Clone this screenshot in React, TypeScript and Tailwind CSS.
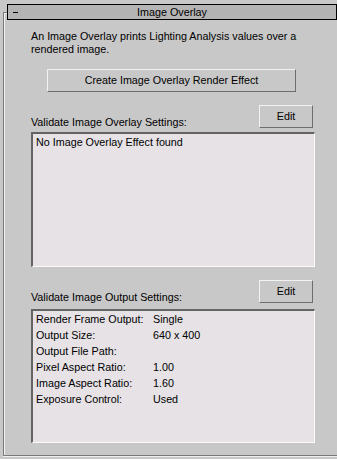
import React from 'react';

const font = { fontFamily: '"Liberation Sans", Arial, sans-serif' };

const Button = ({ label, className }: { label: string; className: string }) => (
  <button
    className={`flex items-center justify-center bg-[#c8c8c8] text-black border border-t-[#f2f2f2] border-l-[#f2f2f2] border-b-[#6e6e6e] border-r-[#6e6e6e] ${className}`}
  >
    {label}
  </button>
);

const ListBox = ({ height, children }: { height: string; children?: React.ReactNode }) => (
  <div
    className={`w-[284px] ${height} bg-[#e6e2e6] border-t-2 border-l-2 border-t-[#646464] border-l-[#646464] border-r border-b border-r-[#fafafa] border-b-[#fafafa] pl-[3px] leading-[16px]`}
  >
    {children}
  </div>
);

const App = () => {
  const outputRows = [
    { label: 'Render Frame Output:', value: 'Single' },
    { label: 'Output Size:', value: '640 x 400' },
    { label: 'Output File Path:', value: '' },
    { label: 'Pixel Aspect Ratio:', value: '1.00' },
    { label: 'Image Aspect Ratio:', value: '1.60' },
    { label: 'Exposure Control:', value: 'Used' }
  ];

  return (
    <div className="w-[337px] h-[459px] bg-[#c8c8c8] overflow-hidden pt-[12px] pl-[3px] text-[10.75px] text-black" style={font}>
      <div className="w-[340px] h-[444px] border-l border-t border-b border-[#7a7a7a] shadow-[inset_1px_1px_0_#f0f0f0,0_1px_0_#f0f0f0]">
        {/* rollout header */}
        <div className="ml-[3px] -mt-[9px] w-[330px] h-[16px] border border-black bg-[#b4b4b4] flex items-center">
          <div className="w-[20px] flex items-center pl-[5px]">
            <div className="w-[5px] h-px bg-black" />
          </div>
          <div className="flex-1 text-center leading-[14px]">Image Overlay</div>
          <div className="w-[20px]" />
        </div>

        <div className="pl-[27px] flex flex-col">
          <p className="mt-[10px] w-[290px] leading-[13px]">
            An Image Overlay prints Lighting Analysis values over a rendered image.
          </p>

          <Button label="Create Image Overlay Render Effect" className="mt-[13px] ml-[16px] w-[249px] h-[23px]" />

          <div className="mt-[13px] w-[284px] h-[27px] pr-[2px] flex justify-between items-start">
            <span className="mt-[11px] leading-[13px]">Validate Image Overlay Settings:</span>
            <Button label="Edit" className="w-[54px] h-[23px]" />
          </div>
          <ListBox height="h-[135px]">No Image Overlay Effect found</ListBox>

          <div className="mt-[13px] w-[284px] h-[29px] pr-[2px] flex justify-between items-start">
            <span className="mt-[11px] leading-[13px]">Validate Image Output Settings:</span>
            <Button label="Edit" className="w-[54px] h-[23px]" />
          </div>
          <ListBox height="h-[134px]">
            {outputRows.map((row, i) => (
              <div key={i} className="flex">
                <span className="w-[117px]">{row.label}</span>
                <span>{row.value}</span>
              </div>
            ))}
          </ListBox>
        </div>
      </div>
    </div>
  );
};

export default App;
